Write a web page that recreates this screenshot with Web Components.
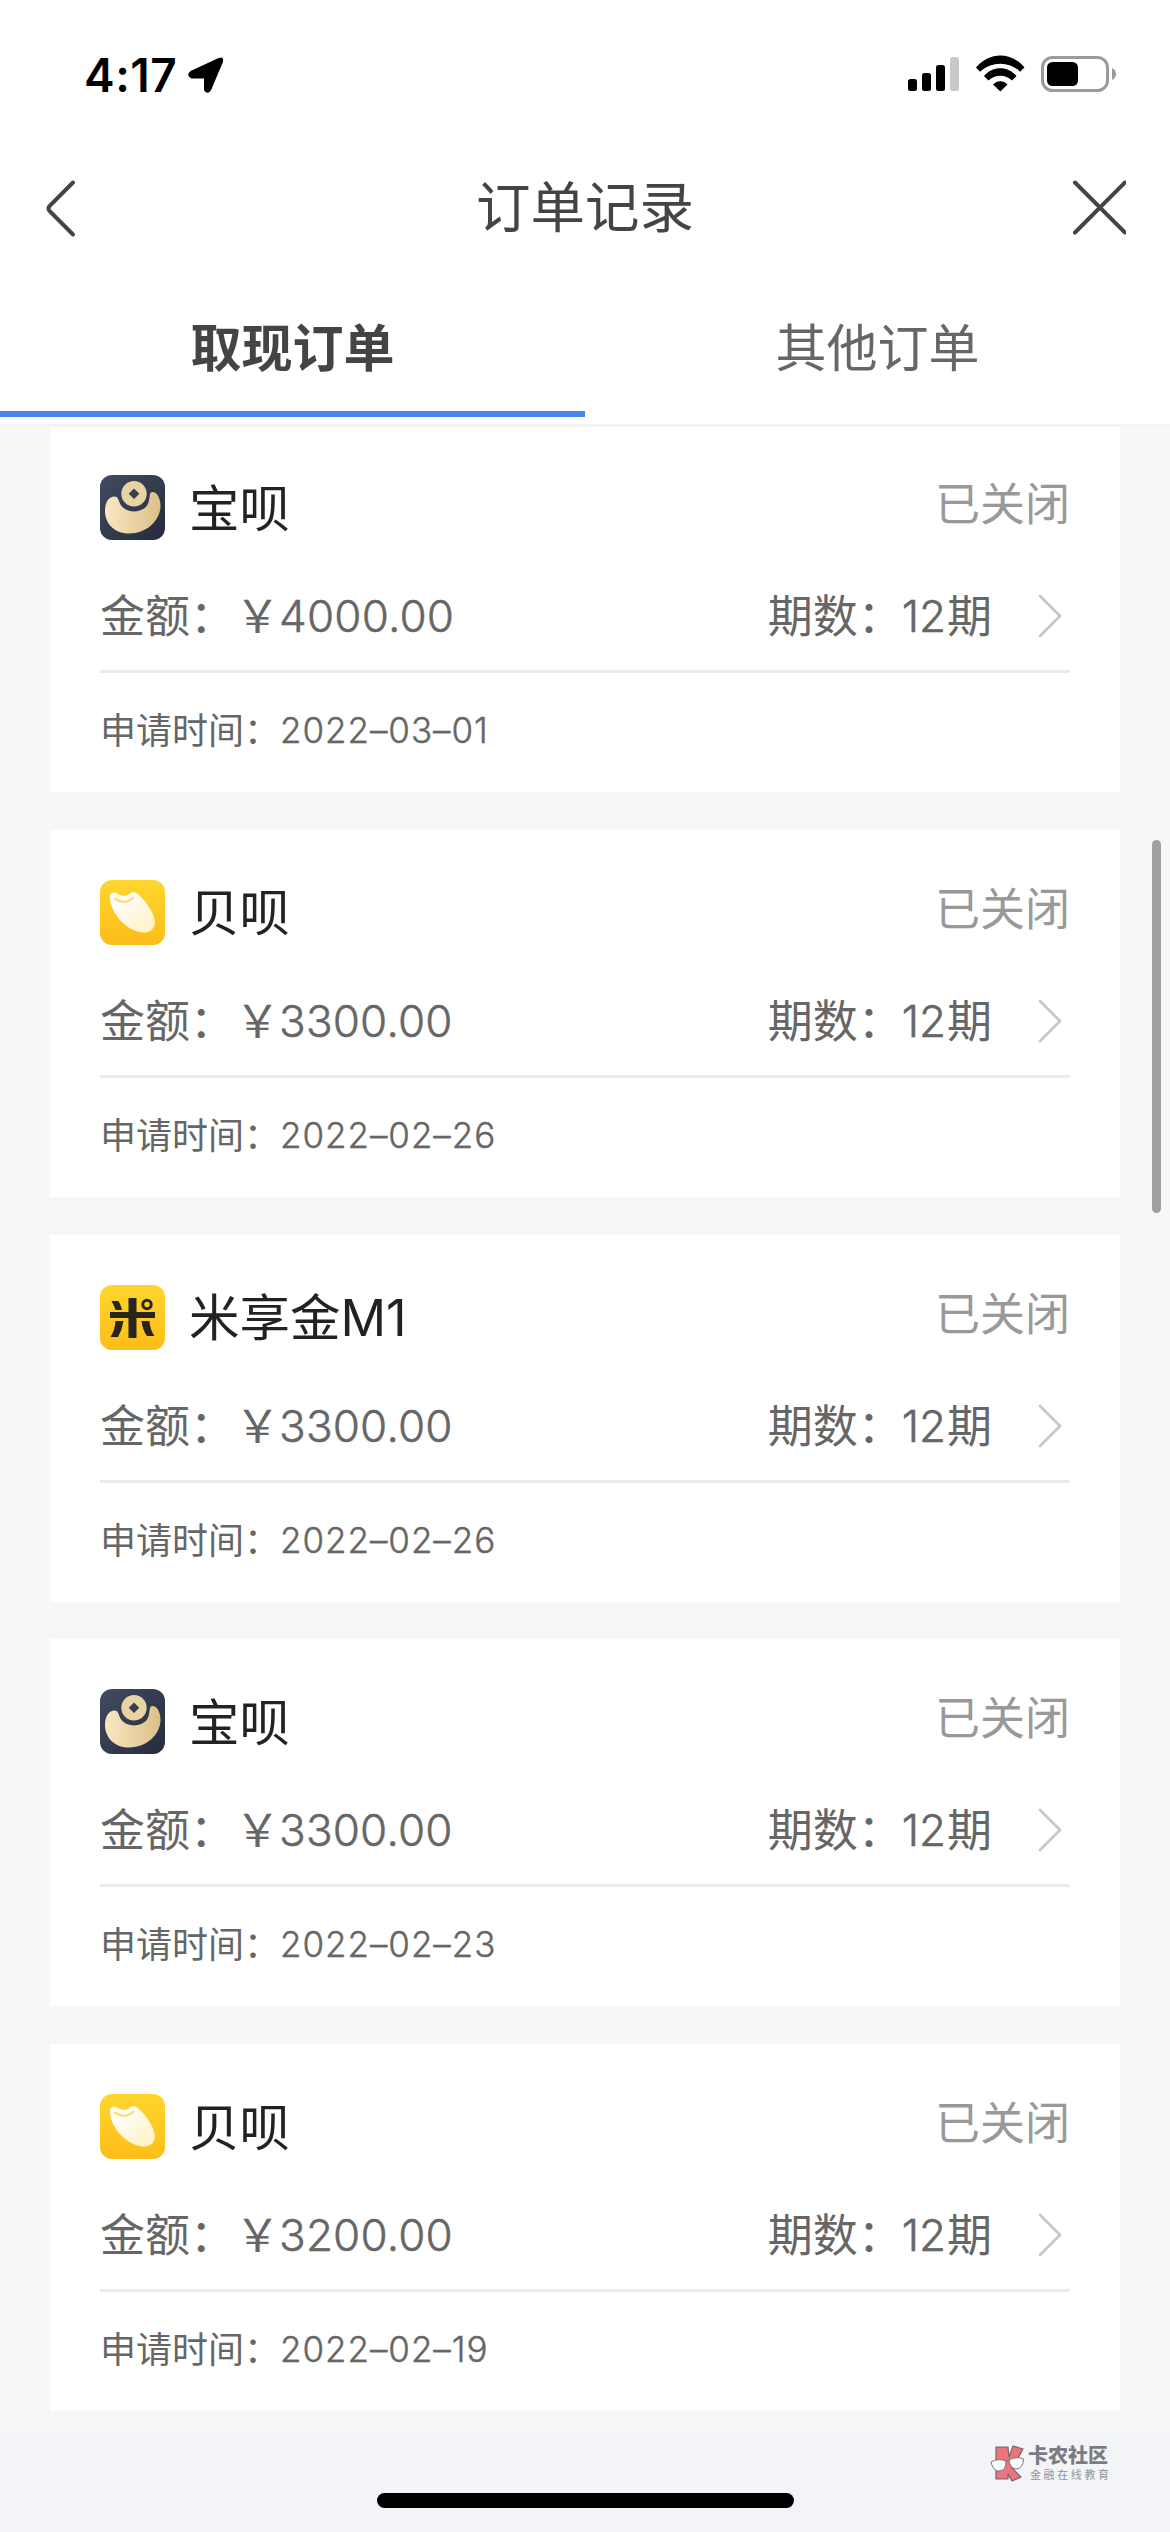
<!DOCTYPE html>
<html lang="zh-CN">
<head>
<meta charset="utf-8">
<title>订单记录</title>
<style>
html,body{margin:0;padding:0}
body{width:1170px;height:2532px;overflow:hidden;background:#f7f7f7;font-family:Inter,"Noto Sans CJK SC",sans-serif;color:#666}
</style>
</head>
<body>
<order-screen></order-screen>
<script>
const CJK = '"Noto Sans CJK SC",sans-serif';
function define(name, html, setup) {
  customElements.define(name, class extends HTMLElement {
    connectedCallback() {
      if (this.shadowRoot) return;
      const root = this.attachShadow({ mode: 'open' });
      root.innerHTML = html;
      if (setup) setup(this, root);
    }
  });
}

define('status-bar', `
<style>
:host{display:flex;height:150px;box-sizing:border-box;padding:46px 53px 0 84px;justify-content:space-between;align-items:flex-start}
.l,.r{display:flex;align-items:flex-start}
.t{font:600 46px/58px Inter,sans-serif;color:#000;letter-spacing:.5px;width:104px;white-space:nowrap}
svg{display:block}
.l svg{margin-top:11px}
.r svg{margin-top:9px}
</style>
<div class="l"><span class="t">4:17</span>
<svg width="36" height="36" viewBox="0 0 36 36"><path d="M3 15 31 2Q34.500 0 34 4.500L22 33Q19.500 36.500 17 33V20.500H4Q-1 18.500 3 15Z" fill="#000" stroke="#000" stroke-width="2" stroke-linejoin="round"/></svg></div>
<div class="r">
<svg width="209" height="38" viewBox="0 0 209 38">
<rect x="0" y="24" width="9" height="12" rx="2.500"/><rect x="14" y="18" width="9" height="18" rx="2.500"/><rect x="28" y="10" width="9" height="26" rx="2.500"/><rect x="42" y="2" width="9" height="34" rx="2.500" fill="#c8c8c8"/>
<path d="M68 12.500 72 16.700C83.500 6 101.500 6 112 16.700L116.500 12.500C103-3.500 81.500-3.500 68 12.500Z"/>
<path d="M76 21 80.500 25.500C86.500 19 98 19 104 25.500L108.500 21C100 10.500 84.500 10.500 76 21Z"/>
<path d="M85 29.500 92.300 36.500 99.500 29.500C95.500 25 89 25 85 29.500Z"/>
<rect x="134.500" y="2.500" width="65" height="33" rx="10" fill="none" stroke="#9b9b9b" stroke-width="3"/>
<rect x="139" y="7" width="31" height="24" rx="5.500"/>
<path d="M204 13Q208 15 208 19T204 25Z" fill="#9b9b9b"/>
</svg></div>`);

define('nav-bar', `
<style>
:host{display:flex;height:116px;align-items:center;justify-content:space-between;padding:0 44px}
.t{font:400 54.500px/80px ${CJK};color:#444;padding-bottom:8px}
svg{display:block}
</style>
<svg width="54" height="60" viewBox="0 0 54 60"><path d="M29 4.500 5.500 28Q3.500 30.500 5.500 33L29 56.500" fill="none" stroke="#444" stroke-width="4" stroke-linecap="round"/></svg>
<span class="t"><slot></slot></span>
<svg width="54" height="57" viewBox="0 0 54 57"><path d="M3 2.500 53 52.500M53 2.500 3 52.500" fill="none" stroke="#444" stroke-width="4" stroke-linecap="round"/></svg>`);

define('tab-item', `
<style>
:host{display:flex;flex:1;height:158px;flex-direction:column;justify-content:flex-end;align-items:center;color:#666;font:400 51px/76px ${CJK}}
:host([active]){color:#444;font-weight:700}
.x{margin-bottom:28px}
.b{width:100%;height:6px;margin-bottom:7px}
:host([active]) .b{background:#4785ef}
</style><span class="x"><slot></slot></span><div class="b"></div>`);

define('tab-strip', `
<style>:host{display:flex;border-bottom:3px solid #f5f5f5}</style><slot></slot>`);

const ICONS = {
  bao: `<defs><linearGradient id="n" x1="0" y1="0" x2="1" y2="1"><stop offset="0" stop-color="#424c60"/><stop offset="1" stop-color="#252b3b"/></linearGradient><linearGradient id="g"><stop offset="0" stop-color="#f8e8c2"/><stop offset="1" stop-color="#dcbf88"/></linearGradient></defs>
  <rect width="65" height="65" rx="12" fill="url(#n)"/>
  <path d="M5 36C5 27 9 21.500 14.500 21.500 19 21.500 18 26 21.500 31 27 38 41 38.500 47 30.500 51 25 48 17 52.500 17 57 17 60.500 23 60.500 31 60.500 44 48 58.500 29 58.500 14 58.500 5 48 5 36Z" fill="url(#g)"/>
  <path fill-rule="evenodd" d="M34 6A12.700 12.700 0 1 1 34 31.400A12.700 12.700 0 1 1 34 6ZM34 13.500 28.700 18.800 34 24 39.300 18.800Z" fill="#e9d3a2"/>`,
  bei: `<defs><linearGradient id="y" x1="0" y1="0" x2="0" y2="1"><stop offset="0" stop-color="#ffd62e"/><stop offset="1" stop-color="#fdbd18"/></linearGradient><linearGradient id="w" x1="0" y1="0" x2="1" y2="1"><stop offset=".3" stop-color="#fffdf5"/><stop offset="1" stop-color="#fff0bd"/></linearGradient></defs>
  <rect width="65" height="65" rx="12" fill="url(#y)"/>
  <path d="M10 19C9 13 14 11 18 14 23 17 27 16 30 13.500 34 11 37 12.500 42 18 49 25 55 36 55 43 54 51 48 53 42 52.500 28 51 12 36 10 19Z" fill="url(#w)"/>
  <path d="M15 18.500C20 23 28 23 33.500 17.500" fill="none" stroke="#ffda67" stroke-width="1.800" stroke-linecap="round"/>`,
  mi: `<defs><linearGradient id="m" x1="0" y1="0" x2="0" y2="1"><stop offset="0" stop-color="#ffd62e"/><stop offset="1" stop-color="#fdbd18"/></linearGradient></defs>
  <rect width="65" height="65" rx="12" fill="url(#m)"/>
  <g fill="#28251c"><rect x="28.500" y="13" width="8" height="40"/><rect x="10" y="27" width="45" height="6"/><path d="M11.500 16H18.500Q21 20 22 25H15.500Q14 20 11.500 16Z"/><path d="M15.500 36H23.500Q22 45 18 52H10.500Q15 45 15.500 36Z"/><path d="M41.500 36H49.500Q50 45 54.500 51H47Q42.500 45 41.500 36Z"/></g>
  <circle cx="47" cy="19.500" r="4.200" fill="none" stroke="#28251c" stroke-width="3"/>`
};

define('product-icon', `<style>:host{display:block;width:65px;height:65px}svg{display:block}</style><svg width="65" height="65" viewBox="0 0 65 65"></svg>`,
  (el, root) => { root.querySelector('svg').innerHTML = ICONS[el.getAttribute('kind')]; });

define('order-card', `
<style>
:host{display:flex;flex-direction:column;box-sizing:border-box;height:367px;padding:50px 50px 0;background:#fff}
.head{display:flex;height:65px;align-items:center}
.name{flex:1;margin-left:24px;color:#222;font:400 50.500px/64px Inter,${CJK};padding-top:2px}
.st{color:#999;font:400 45px/60px ${CJK};margin-top:-11px}
.info{display:flex;align-items:center;height:60px;margin-top:46px;padding-bottom:24px;border-bottom:3px solid #ebebeb;font:400 45px/60px ${CJK};white-space:nowrap}
.k{margin-top:-4px}
.amt{flex:1;display:flex;align-items:center}
.num{font:300 44px/60px Inter,sans-serif;-webkit-text-stroke:.5px currentColor}
.n{margin-left:-1px;margin-right:1px}
.a{margin-left:-1px;letter-spacing:.2px}
svg{display:block;margin-left:46px;margin-right:8px}
.date{display:flex;margin-top:34px;font:400 36px/46px ${CJK}}
.date .k{margin-top:-2px}
.date .num{font-size:35px;line-height:46px;letter-spacing:.95px;-webkit-text-stroke-width:.4px}
</style>
<div class="head"><product-icon></product-icon><span class="name"></span><span class="st">已关闭</span></div>
<div class="info"><span class="amt"><span class="k">金额：￥</span><span class="num a"></span></span><span class="k">期数：</span><span class="num n">12</span><span class="k">期</span>
<svg width="24" height="44" viewBox="0 0 24 44"><path d="M2 2 22 22 2 42" fill="none" stroke="#c8c8c8" stroke-width="2.800" stroke-linecap="round" stroke-linejoin="round"/></svg></div>
<div class="date"><span class="k">申请时间：</span><span class="num d"></span></div>`,
  (el, root) => {
    const $ = s => root.querySelector(s);
    $('product-icon').replaceWith(Object.assign(document.createElement('template'), { innerHTML: `<product-icon kind="${el.getAttribute('kind')}"></product-icon>` }).content);
    $('.name').textContent = el.getAttribute('name');
    $('.a').textContent = el.getAttribute('amount');
    $('.d').textContent = el.getAttribute('date');
  });

define('site-mark', `
<style>
:host{display:flex;position:absolute;left:990px;top:2445px;gap:3px}
.t{display:flex;flex-direction:column}
b{font:900 20px/20px ${CJK};color:#7b7c81;white-space:nowrap}
small{font:400 11px/13px ${CJK};color:#919297;letter-spacing:2.600px;margin:3px 0 0 2px;white-space:nowrap}
svg{display:block}
</style>
<svg width="35" height="37" viewBox="0 0 35 37"><g fill="#eb747d" stroke="#77646b" stroke-width="1.200" stroke-linejoin="round"><path d="M6 2H18L19 12 23 1 33 4 27 15 22 23 31 32 22 36 18 29V34H6Z"/></g><g fill="#fff" stroke="#77797e" stroke-width="1"><path d="M1 17Q8 13 16 16 16 26 9 26 3 26 1 17Z"/><path d="M19 15Q26 11 33.500 14 33 24 26 24 20 23 19 15Z"/><path d="M16 17 19 15"/></g></svg>
<div class="t"><b>卡农社区</b><small>金融在线教育</small></div>`);

define('home-area', `
<style>:host{display:flex;height:101px;background:#f3f4f8;justify-content:center;align-items:flex-end;box-sizing:border-box;padding-bottom:24px}
div{width:417px;height:15px;border-radius:8px;background:#000}</style><div></div>`);

define('order-screen', `
<style>
:host{display:flex;flex-direction:column;position:relative;width:1170px;height:2532px;background:#f7f7f7;overflow:hidden}
header{background:#fff;position:relative;z-index:1}
main{display:flex;flex-direction:column;gap:37.750px;padding:0 50px;margin-top:-2px;flex:1}
.bar{position:absolute;right:9px;top:840px;width:9px;height:373px;border-radius:5px;background:#a0a0a0}
</style>
<header><status-bar></status-bar><nav-bar>订单记录</nav-bar><tab-strip><tab-item active>取现订单</tab-item><tab-item>其他订单</tab-item></tab-strip></header>
<main>
<order-card kind="bao" name="宝呗" amount="4000.00" date="2022–03–01"></order-card>
<order-card kind="bei" name="贝呗" amount="3300.00" date="2022–02–26"></order-card>
<order-card kind="mi" name="米享金M1" amount="3300.00" date="2022–02–26"></order-card>
<order-card kind="bao" name="宝呗" amount="3300.00" date="2022–02–23"></order-card>
<order-card kind="bei" name="贝呗" amount="3200.00" date="2022–02–19"></order-card>
</main>
<home-area></home-area>
<div class="bar"></div>
<site-mark></site-mark>`);
</script>
</body>
</html>
